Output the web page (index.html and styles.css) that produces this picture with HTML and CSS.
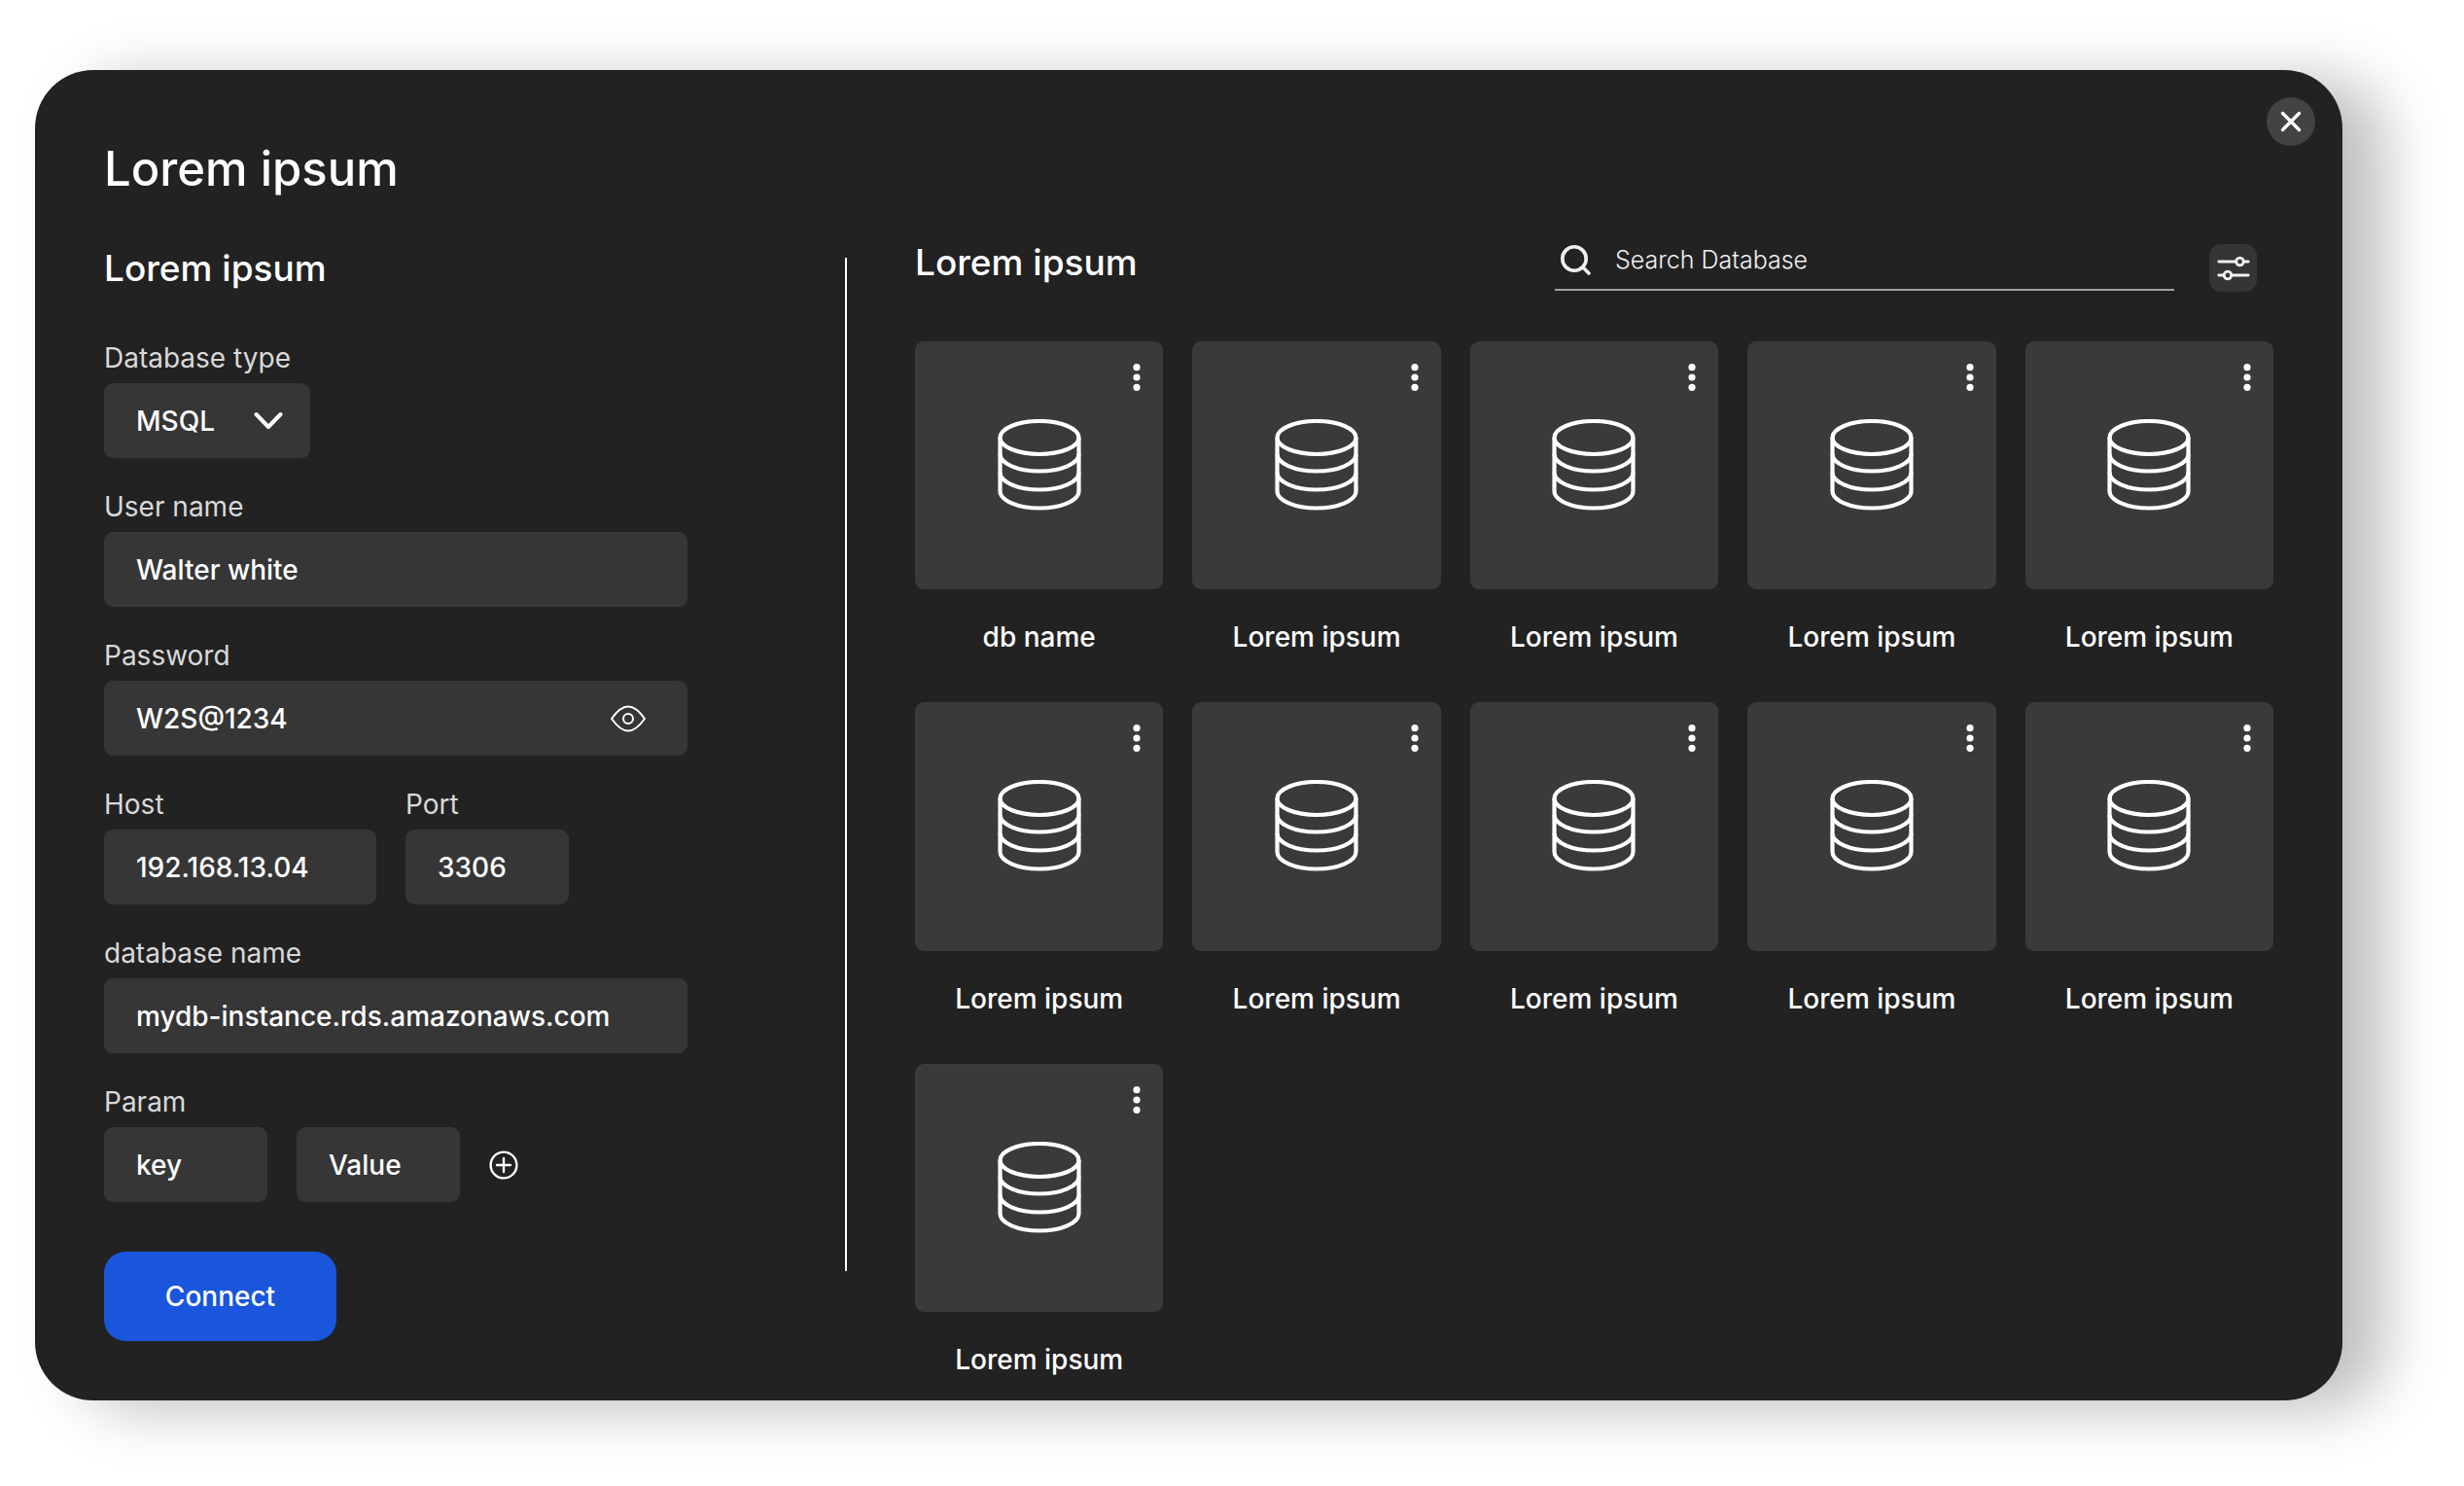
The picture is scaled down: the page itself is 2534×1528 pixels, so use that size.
FILE: index.html
```html
<!DOCTYPE html>
<html lang="en">
<head>
<meta charset="utf-8">
<meta name="viewport" content="width=device-width, initial-scale=1">
<title>Connect a database</title>
<link rel="stylesheet" href="styles.css">
</head>
<body>
<svg class="sprite" aria-hidden="true">
  <symbol id="db" viewBox="0 1 86 96">
    <g fill="none" stroke="currentColor" stroke-width="4.200">
      <ellipse cx="43" cy="20" rx="40.500" ry="17"/>
      <path d="M2.500 20v55c0 9.500 18 17.500 40.500 17.500s40.500-8 40.500-17.500V20"/>
      <path d="M2.500 37c0 9.500 18 17.500 40.500 17.500s40.500-8 40.500-17.500"/>
      <path d="M2.500 56c0 9.500 18 17.500 40.500 17.500s40.500-8 40.500-17.500"/>
    </g>
  </symbol>
  <symbol id="dots" viewBox="0 0 8 28">
    <g fill="currentColor"><circle cx="4" cy="3.700" r="3.600"/><circle cx="4" cy="14" r="3.600"/><circle cx="4" cy="24.300" r="3.600"/></g>
  </symbol>
</svg>
<main class="dialog">
  <button class="close" type="button" aria-label="Close">
    <svg width="22" height="22" viewBox="0 0 22 22"><path d="M2.500 2.500l17 17M19.500 2.500l-17 17" fill="none" stroke="currentColor" stroke-width="3.400" stroke-linecap="round"/></svg>
  </button>
  <h1 class="title">Lorem ipsum</h1>
  <div class="columns">
    <form class="form">
      <h2 class="subtitle form-title">Lorem ipsum</h2>
      <div class="field">
        <label for="type">Database type</label>
        <div class="select">
          <select id="type" class="control"><option>MSQL</option></select>
          <svg class="chevron" width="30" height="20" viewBox="0 0 30 20"><path d="M2.500 3L15 16 27.500 3" fill="none" stroke="currentColor" stroke-width="4" stroke-linecap="round" stroke-linejoin="round"/></svg>
        </div>
      </div>
      <div class="field">
        <label for="user">User name</label>
        <input id="user" class="control" type="text" value="Walter white">
      </div>
      <div class="field">
        <label for="password">Password</label>
        <div class="control password">
          <input id="password" type="text" value="W2S@1234">
          <button class="icon-button" type="button" aria-label="Hide password">
            <svg width="36" height="28" viewBox="0 0 36 28"><g fill="none" stroke="currentColor" stroke-width="2"><path d="M1 14C7 5.500 12 1.500 18 1.500S29 5.500 35 14C29 22.500 24 26.500 18 26.500S7 22.500 1 14z" stroke-linejoin="round"/><circle cx="18" cy="14" r="5"/></g></svg>
          </button>
        </div>
      </div>
      <div class="row">
        <div class="field host">
          <label for="host">Host</label>
          <input id="host" class="control" type="text" value="192.168.13.04">
        </div>
        <div class="field small">
          <label for="port">Port</label>
          <input id="port" class="control" type="text" value="3306">
        </div>
      </div>
      <div class="field">
        <label for="dbname">database name</label>
        <input id="dbname" class="control" type="text" value="mydb-instance.rds.amazonaws.com">
      </div>
      <div class="field">
        <label for="key">Param</label>
        <div class="row param">
          <input id="key" class="control small" type="text" value="key">
          <input class="control small" type="text" value="Value" aria-label="Param value">
          <button class="icon-button" type="button" aria-label="Add param">
            <svg width="30" height="30" viewBox="0 0 30 30"><g fill="none" stroke="currentColor" stroke-width="2.400"><circle cx="15" cy="15" r="13.400"/><path d="M15 8v14M8 15h14" stroke-linecap="round"/></g></svg>
          </button>
        </div>
      </div>
      <button class="connect" type="submit">Connect</button>
    </form>
    <section class="browser">
      <header class="browser-head">
        <h2 class="subtitle">Lorem ipsum</h2>
        <div class="search">
          <svg width="36" height="36" viewBox="0 0 36 36"><g fill="none" stroke="currentColor" stroke-width="3.600"><circle cx="18" cy="17" r="12.200"/><path d="M27 26l6 6" stroke-linecap="round"/></g></svg>
          <input type="search" placeholder="Search Database" aria-label="Search Database">
        </div>
        <button class="filter" type="button" aria-label="Filters">
          <svg width="34" height="26" viewBox="0 0 34 26"><g fill="none" stroke="currentColor" stroke-width="2.800" stroke-linecap="round"><path d="M1.800 6H19M28 6h4.200M1.800 20H7M15 20h17.200"/><circle cx="23.500" cy="6" r="3.800"/><circle cx="11" cy="20" r="3.800"/></g></svg>
        </button>
      </header>
      <ul class="grid">
        <li><div class="tile"><svg class="db"><use href="#db"/></svg><button class="more" type="button" aria-label="More"><svg><use href="#dots"/></svg></button></div><span>db name</span></li>
        <li><div class="tile"><svg class="db"><use href="#db"/></svg><button class="more" type="button" aria-label="More"><svg><use href="#dots"/></svg></button></div><span>Lorem ipsum</span></li>
        <li><div class="tile"><svg class="db"><use href="#db"/></svg><button class="more" type="button" aria-label="More"><svg><use href="#dots"/></svg></button></div><span>Lorem ipsum</span></li>
        <li><div class="tile"><svg class="db"><use href="#db"/></svg><button class="more" type="button" aria-label="More"><svg><use href="#dots"/></svg></button></div><span>Lorem ipsum</span></li>
        <li><div class="tile"><svg class="db"><use href="#db"/></svg><button class="more" type="button" aria-label="More"><svg><use href="#dots"/></svg></button></div><span>Lorem ipsum</span></li>
        <li><div class="tile"><svg class="db"><use href="#db"/></svg><button class="more" type="button" aria-label="More"><svg><use href="#dots"/></svg></button></div><span>Lorem ipsum</span></li>
        <li><div class="tile"><svg class="db"><use href="#db"/></svg><button class="more" type="button" aria-label="More"><svg><use href="#dots"/></svg></button></div><span>Lorem ipsum</span></li>
        <li><div class="tile"><svg class="db"><use href="#db"/></svg><button class="more" type="button" aria-label="More"><svg><use href="#dots"/></svg></button></div><span>Lorem ipsum</span></li>
        <li><div class="tile"><svg class="db"><use href="#db"/></svg><button class="more" type="button" aria-label="More"><svg><use href="#dots"/></svg></button></div><span>Lorem ipsum</span></li>
        <li><div class="tile"><svg class="db"><use href="#db"/></svg><button class="more" type="button" aria-label="More"><svg><use href="#dots"/></svg></button></div><span>Lorem ipsum</span></li>
        <li><div class="tile"><svg class="db"><use href="#db"/></svg><button class="more" type="button" aria-label="More"><svg><use href="#dots"/></svg></button></div><span>Lorem ipsum</span></li>
      </ul>
    </section>
  </div>
</main>
</body>
</html>
```
FILE: styles.css
```css
* {
  box-sizing: border-box;
}

body {
  margin: 0;
  padding: 72px 125px 88px 36px;
  background: #fff;
  color: #fff;
  font-family: Inter, "Liberation Sans", sans-serif;
  font-size: 28px;
  line-height: 36px;
}

button,
input,
select {
  font: inherit;
  color: inherit;
  background: none;
  border: 0;
  margin: 0;
  padding: 0;
  outline: 0;
}

svg {
  display: block;
}

.sprite {
  position: absolute;
  width: 0;
  height: 0;
}

.dialog {
  position: relative;
  padding: 72px 71px 24px;
  border-radius: 60px;
  background: #222;
  box-shadow: 44px 9px 60px rgba(0, 0, 0, 0.25);
}

.close {
  position: absolute;
  top: 28px;
  right: 28px;
  display: grid;
  place-items: center;
  width: 50px;
  height: 50px;
  border-radius: 50%;
  background: #434343;
}

.title {
  margin: 0;
  font-size: 49px;
  line-height: 60px;
  font-weight: 500;
}

.subtitle {
  margin: 0;
  font-size: 37px;
  line-height: 44px;
  font-weight: 500;
}

.columns {
  display: flex;
  margin-top: 44px;
}

.form {
  flex: 0 0 763px;
  padding-right: 163px;
  display: flex;
  flex-direction: column;
  align-items: stretch;
}

.form-title {
  margin: 6px 0 51px;
}

.field {
  display: flex;
  flex-direction: column;
  margin-bottom: 31px;
}

.field label {
  height: 45px;
  color: #d9d9d9;
  line-height: 38px;
}

.control {
  width: 100%;
  height: 77px;
  padding: 0 33px;
  border-radius: 9px;
  background: #363636;
  font-weight: 500;
}

.select {
  position: relative;
  width: 212px;
}

.select .control {
  appearance: none;
}

.chevron {
  position: absolute;
  top: 29px;
  right: 28px;
  pointer-events: none;
}

.password {
  display: flex;
  align-items: center;
  padding-right: 43px;
}

.password input {
  flex: 1;
  min-width: 0;
}

.row {
  display: flex;
  gap: 30px;
}

.host {
  width: 280px;
}

.small {
  width: 168px;
}

.param {
  align-items: center;
}

.connect {
  align-self: flex-start;
  width: 239px;
  height: 92px;
  margin-top: 20px;
  border-radius: 22px;
  background: #1a56db;
  font-weight: 500;
}

.browser {
  position: relative;
  flex: 1;
  padding-left: 71px;
}

.browser::before {
  content: "";
  position: absolute;
  left: -1px;
  top: 17px;
  bottom: 109px;
  width: 2px;
  background: #fff;
}

.browser-head {
  display: flex;
  align-items: flex-start;
  padding-right: 17px;
  height: 103px;
}

.search {
  display: flex;
  align-items: center;
  gap: 24px;
  width: 637px;
  height: 51px;
  margin-left: auto;
  padding: 0 2px 12px;
  border-bottom: 2px solid #a0a0a0;
  color: #f0f0f0;
  font-size: 25px;
  font-weight: 300;
}

.search input {
  flex: 1;
  min-width: 0;
}

.search input::placeholder {
  color: #f0f0f0;
  opacity: 1;
}

.filter {
  display: grid;
  place-items: center;
  width: 49px;
  height: 49px;
  margin: 3px 0 0 36px;
  border-radius: 12px;
  background: #353535;
  color: #f0f0f0;
}

.grid {
  display: grid;
  grid-template-columns: repeat(5, 1fr);
  gap: 49px 30px;
  margin: 0;
  padding: 0;
  list-style: none;
  font-weight: 500;
  text-align: center;
}

.tile {
  position: relative;
  display: grid;
  place-items: center;
  aspect-ratio: 1;
  margin-bottom: 31px;
  border-radius: 9px;
  background: #3a3a3a;
}

.db {
  width: 86px;
  height: 96px;
}

.more {
  position: absolute;
  top: 23px;
  right: 23px;
}

.more svg {
  width: 8px;
  height: 28px;
}
```
